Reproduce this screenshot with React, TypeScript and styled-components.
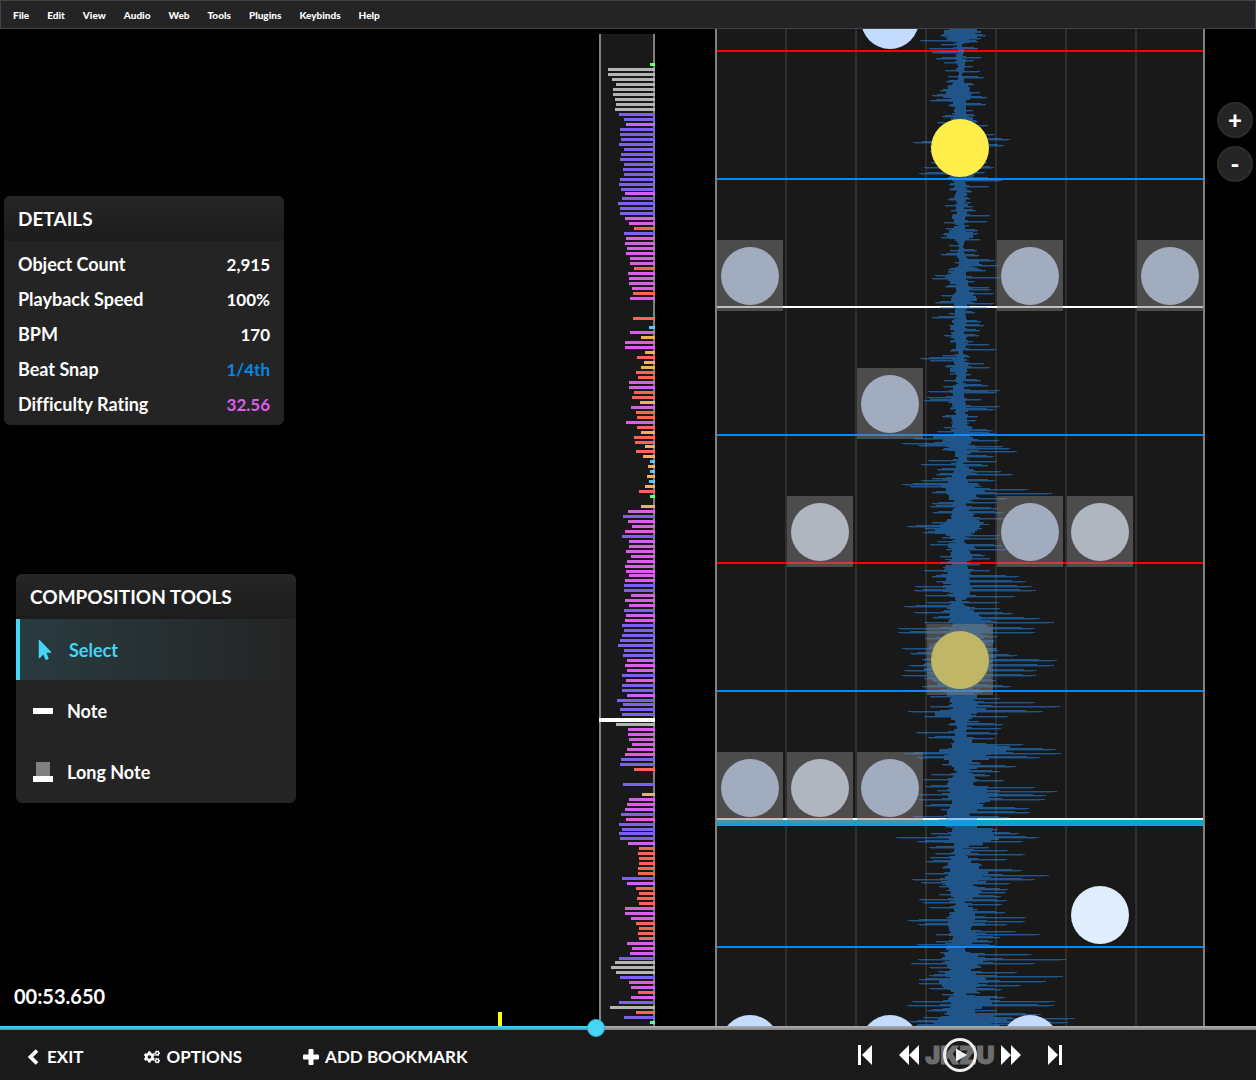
import React, { useState } from 'react';
import styled, { createGlobalStyle } from 'styled-components';
import { FaCogs, FaMousePointer } from 'react-icons/fa';

const GlobalStyle = createGlobalStyle`
  * { box-sizing: border-box; }
  body {
    margin: 0;
    background: #000;
    color: #fff;
    font-family: Lato, "Liberation Sans", sans-serif;
    font-weight: 700;
    overflow: hidden;
  }
  button { font: inherit; color: inherit; background: none; border: 0; padding: 0; cursor: pointer; }
`;

/* ---------- data ---------- */

const MENU = ['File', 'Edit', 'View', 'Audio', 'Web', 'Tools', 'Plugins', 'Keybinds', 'Help'];

const DETAILS: { label: string; value: string; color?: string }[] = [
  { label: 'Object Count', value: '2,915' },
  { label: 'Playback Speed', value: '100%' },
  { label: 'BPM', value: '170' },
  { label: 'Beat Snap', value: '1/4th', color: '#0587e5' },
  { label: 'Difficulty Rating', value: '32.56', color: '#d85fe8' },
];

const DENSITY_COLORS: Record<string, string> = {
  W: '#b4b4b4',
  P: '#7b61ee',
  M: '#d95fe8',
  R: '#fc6358',
  O: '#f5ad5a',
  C: '#5ac4ff',
  G: '#5dff75',
};

/* Runs of bars: start offset, then colour key + width for each bar. */
const DENSITY: [number, string][] = [
  [29, 'G5 W47 W47 W43 W39 W42 W42 W40 W39 W40 P36 P31 M29 P35 P35 P34 P36 P31 P34 P35 P31 P32 P31 P35 P36 P34'],
  [158, 'M30 P33 P37 P35 P35 M30 M26 R21 P31 M29 M30 M28 M29 M25 M25 R21 M27 M26 M26 M23 R22 M25'],
  [283, 'R22'],
  [292, 'C6 M25 O14 M30 M30 O10 R18 O11 O14 R19 R17 M26 M26 R21 R23 O15 M24 R19 R18 M29 R18 O14 R21 R20'],
  [411, 'O10 R19 O12 C5 O7 C5 O8 C6 O10 R16 G5'],
  [471, 'O14 M27 P32 M27 M23 M30 P33 M26 M26 M29 M24 M28 M30 M29'],
  [540, 'M26 M30 P31 P31 M24 M30 M26 P31 M29 M30 P33 P31 P33 P35 P37 P31 P32 M28 M30 M28 P33 M29 P33 P33 M28 P38'],
  [669, 'P32 P35 P33'],
  [689, 'W39 M27 M27 M26 M23 M28 M30 P34 P35 R21'],
  [749, 'P32'],
  [759, 'O13 M26 M28 M30 P34 M29 P36 P33'],
  [798, 'P36 P35 M27 R16 R17 R16 R16 R17 R17 P33 M28 R19 R16 R18 R16 M30 M30 M24 R19 R16 R17 R16 M28 M23 M25 P36'],
  [927, 'W40 W44 W39 P35 M26 M24 R17 M24 P36 W45 R19 P31 G5'],
];

const BARS = DENSITY.flatMap(([start, run]) =>
  run.split(' ').map((b, i) => ({ y: start + i * 5, color: DENSITY_COLORS[b[0]], width: Number(b.slice(1)) })),
);

const SNAP_LINES = [
  { y: 21, color: '#ff0000' },
  { y: 149, color: '#0587ff' },
  { y: 277, color: '#ffffff' },
  { y: 405, color: '#0587ff' },
  { y: 533, color: '#ff0000' },
  { y: 661, color: '#0587ff' },
  { y: 789, color: '#ffffff' },
  { y: 917, color: '#0587ff' },
];

type NoteData = { y: number; selected?: boolean };

const LANES: { color: string; notes: NoteData[] }[] = [
  { color: '#c2dbff', notes: [{ y: 218, selected: true }, { y: 730, selected: true }, { y: 986 }] },
  { color: '#e0edff', notes: [{ y: 474, selected: true }, { y: 730, selected: true }] },
  { color: '#c2dbff', notes: [{ y: -38 }, { y: 346, selected: true }, { y: 730, selected: true }, { y: 986 }] },
  { color: '#ffee4a', notes: [{ y: 90 }, { y: 602, selected: true }] },
  { color: '#c2dbff', notes: [{ y: 218, selected: true }, { y: 474, selected: true }, { y: 986 }] },
  { color: '#e0edff', notes: [{ y: 474, selected: true }, { y: 857 }] },
  { color: '#c2dbff', notes: [{ y: 218, selected: true }] },
];

/* Peaks of the waveform: offset and amplitude, one list for each channel. */
const LEFT_PEAKS =
  '35 20,40 40,44 19,48 31,52 28,58 24,62 16,70 15,76 12,81 14,86 13,90 20,95 28,100 30,105 12,113 8,116 18,122 23,128 12,137 20,142 47,146 30,151 30,157 22,162 29,167 36,173 41,178 14,184 11,189 11,199 12,205 15,210 9,215 8,222 16,228 14,234 17,237 19,245 11,250 10,254 19,262 5,269 12,275 25,278 28,286 15,295 19,302 25,307 20,313 11,317 28,325 11,335 16,341 10,350 10,355 18,358 40,360 30,366 15,373 10,380 16,386 17,391 32,397 33,400 36,408 10,416 18,422 9,427 16,431 23,438 46,443 58,445 42,449 18,460 32,464 39,469 23,474 24,478 28,480 39,484 58,486 50,488 14,492 28,496 10,503 28,506 30,512 27,517 9,522 28,526 53,528 35,532 37,537 18,541 23,544 30,549 14,556 20,562 20,567 17,570 36,576 28,581 24,586 45,590 46,595 35,602 34,606 56,612 46,617 27,622 36,628 62,632 62,638 35,643 27,648 58,653 50,659 38,665 51,670 56,675 58,678 36,686 38,690 56,696 30,701 11,706 30,711 52,716 36,724 12,732 44,737 32,743 9,749 20,753 56,757 43,764 18,768 4,774 29,779 36,786 35,790 23,794 44,799 42,805 35,809 19,816 47,820 24,826 15,833 29,837 64,841 43,847 31,853 25,857 30,861 34,867 18,873 35,879 48,882 39,886 21,894 21,899 41,902 37,907 31,913 11,917 14,920 52,924 42,930 10,934 24,941 24,944 43,952 20,959 42,963 49,967 31,971 22,975 31,979 41,983 41,988 31,994 18,1001 48,1005 53,1010 33,1017 37,1021 50,1025 44';
const RIGHT_PEAKS =
  '31 14,35 26,38 21,41 18,48 18,57 21,60 14,66 13,71 20,77 24,84 14,92 20,97 27,104 26,110 13,115 15,121 18,125 28,134 35,139 50,145 44,151 28,157 24,162 27,167 34,172 25,177 28,180 42,186 29,191 12,198 10,202 11,206 13,210 16,215 30,221 27,225 9,230 18,233 18,239 20,250 17,255 19,260 35,265 38,268 18,270 26,277 41,281 15,287 29,289 31,293 34,297 15,303 34,307 27,312 15,321 21,325 24,330 20,335 19,341 13,344 29,349 36,356 10,363 24,367 30,374 11,380 21,385 28,390 40,392 36,399 21,406 40,409 35,416 18,420 16,427 13,430 33,433 36,440 39,446 43,448 50,451 57,456 34,461 37,465 28,471 41,474 53,480 35,484 20,489 68,493 92,498 47,502 37,508 38,512 43,518 45,522 24,528 22,535 40,538 38,545 43,549 47,555 25,558 30,564 20,570 30,576 59,581 66,586 72,590 76,596 55,602 39,608 40,613 53,618 80,622 94,628 75,632 75,636 38,644 33,650 39,655 57,660 97,665 94,670 77,675 76,680 36,686 51,690 30,698 40,702 75,706 100,711 83,716 48,721 19,724 43,728 41,733 38,738 35,744 63,749 96,753 101,757 80,763 21,766 56,771 40,775 30,780 44,787 75,791 97,795 86,799 85,804 24,808 69,812 70,817 49,821 31,829 38,833 59,837 79,841 63,844 23,847 29,850 48,854 65,859 47,864 21,870 62,875 89,879 75,883 50,887 25,889 48,892 46,896 41,900 47,904 42,909 18,912 45,917 66,921 65,924 47,931 56,934 80,937 40,941 33,945 35,954 71,959 106,963 75,967 9,972 57,976 103,981 86,985 61,989 42,992 20,997 45,1001 95,1005 94,1010 37,1014 81,1018 115,1022 108,1025 40';

/* Body of the waveform between peaks: offset, left and right half widths. */
const BODY: [number, number, number][] = [
  [29, 12, 14], [36, 10, 16], [44, 1, 1], [60, 2, 3], [75, 0, 1], [85, 6, 6], [95, 10, 8], [110, 2, 3], [130, 10, 18],
  [170, 12, 18], [180, 3, 4], [200, 2, 3], [215, 4, 5], [225, 2, 2], [233, 12, 12], [243, 0, 1], [258, 0, 6], [263, 0, 22],
  [267, 4, 5], [277, 12, 5], [285, 3, 5], [297, 5, 12], [310, 3, 3], [325, 5, 6], [335, 6, 4], [345, 4, 3], [350, 0, 1],
  [368, 6, 7], [375, 2, 3], [385, 3, 3], [400, 12, 3], [410, 2, 4], [420, 6, 5], [432, 5, 8], [438, 25, 14], [445, 12, 8],
  [452, 3, 10], [460, 0, 2], [470, 5, 8], [480, 12, 6], [490, 14, 24], [500, 5, 6], [515, 5, 12], [525, 15, 20],
  [533, 20, 8], [537, 2, 2], [545, 8, 8], [560, 8, 8], [570, 12, 8], [580, 10, 8], [590, 10, 12], [600, 4, 1],
  [610, 12, 12], [620, 5, 20], [640, 20, 25], [670, 25, 25], [690, 12, 15], [700, 5, 10], [708, 8, 20], [713, 18, 10],
  [720, 4, 5], [730, 4, 5], [742, 5, 12], [748, 10, 44], [753, 18, 40], [760, 8, 12], [770, 2, 8], [785, 10, 14],
  [795, 12, 38], [805, 10, 15], [815, 8, 8], [822, 15, 18], [830, 5, 20], [838, 15, 30], [845, 4, 4], [855, 6, 8],
  [865, 8, 16], [873, 12, 30], [882, 14, 15], [893, 7, 16], [900, 4, 3], [910, 5, 10], [920, 10, 18], [930, 8, 12],
  [940, 8, 14], [950, 10, 2], [957, 14, 28], [964, 8, 20], [970, 8, 12], [980, 14, 28], [987, 12, 12], [992, 4, 5],
  [1003, 12, 34], [1010, 12, 6], [1016, 15, 36], [1026, 32, 40],
];

const WAVE_TOP = 29;
const WAVE_HEIGHT = 997;

function parsePeaks(list: string) {
  return new Map(list.split(',').map((p) => p.split(' ').map(Number) as [number, number]));
}

function bodyAt(y: number, side: 1 | 2) {
  const i = Math.max(1, BODY.findIndex(([by]) => by > y));
  const a = BODY[i - 1];
  const b = BODY[i];
  return a[side] + ((b[side] - a[side]) * (y - a[0])) / (b[0] - a[0]);
}

function buildWave() {
  const sides = [
    { peaks: parsePeaks(LEFT_PEAKS), side: 1 as const, dir: -1 },
    { peaks: parsePeaks(RIGHT_PEAKS), side: 2 as const, dir: 1 },
  ];
  let solid = '';
  let faint = '';
  let seed = 7;
  const random = () => {
    seed = (seed * 16807) % 2147483647;
    return seed / 2147483647;
  };
  const bar = (y: number, from: number, to: number, dir: number) =>
    dir < 0 ? `M${245 - to} ${y}h${to - from}v1h${from - to}z` : `M${245 + from} ${y}h${to - from}v1h${from - to}z`;
  for (const { peaks, side, dir } of sides) {
    let block = 0;
    let left = 0;
    for (let row = 0; row < WAVE_HEIGHT; row++) {
      const y = row + WAVE_TOP;
      const body = bodyAt(y, side);
      if (left === 0) {
        block = Math.round(body * (0.65 + random() * 0.8) + random() * 3);
        left = 1 + Math.floor(random() * 3);
      }
      left -= 1;
      const peak = peaks.get(y) ?? 0;
      const next = peaks.get(y + 1) ?? 0;
      const prev = peaks.get(y - 1) ?? 0;
      const step = Math.round(body + (next - body) * (random() < 0.5 ? 0.75 : 0.2));
      const width = Math.max(block, peak, step, 1);
      const tail = Math.round(prev * 0.95);
      solid += bar(row, 0, width, dir);
      if (tail > width) faint += bar(row, width, tail, dir);
    }
  }
  return { solid, faint };
}

const WAVE = buildWave();

/* ---------- layout ---------- */

const Screen = styled.div`
  display: flex;
  flex-direction: column;
  height: 100vh;
`;

const MenuBar = styled.nav`
  display: flex;
  align-items: center;
  height: 29px;
  padding: 0 3px;
  background: #242424;
  border: 1px solid #41414a;
`;

const MenuItem = styled.button`
  height: 100%;
  padding: 0 9px;
  font-size: 10px;
  font-weight: 900;
`;

const Stage = styled.main`
  display: flex;
  flex: 1;
  min-height: 0;
`;

const Side = styled.div`
  display: flex;
  flex: 1;
  flex-direction: column;
  align-items: flex-start;
  padding: 167px 4px 17px;
`;

const Panel = styled.section`
  width: 280px;
  padding-bottom: 1px;
  background: #242424;
  border-radius: 6px;
  font-variant-ligatures: none;
  overflow: hidden;
`;

const ToolPanel = styled(Panel)`
  margin: 149px 12px 0;
`;

const PanelTitle = styled.h2`
  height: 45px;
  margin: 0;
  padding: 0 14px;
  font-size: 19px;
  line-height: 46px;
  background: linear-gradient(#262626, #1c1c1c);
`;

const DetailList = styled.dl`
  margin: 0;
  padding: 5px 14px 3px;
`;

const DetailRow = styled.div`
  display: flex;
  align-items: baseline;
  justify-content: space-between;
  height: 35px;
  font-size: 18px;
  line-height: 36px;
`;

const DetailValue = styled.dd<{ $color?: string }>`
  margin: 0;
  color: ${(p) => p.$color ?? '#fff'};
  font-size: 17px;
`;

const Tool = styled.button<{ $active: boolean }>`
  display: flex;
  align-items: center;
  gap: 14px;
  width: 100%;
  height: 61px;
  padding-left: ${(p) => (p.$active ? '15px' : '13px')};
  border-left: 4px solid ${(p) => (p.$active ? '#45d6f5' : 'transparent')};
  background: ${(p) => (p.$active ? 'linear-gradient(90deg, #293b40, #242424)' : 'none')};
  color: ${(p) => (p.$active ? '#45d6f5' : '#fff')};
  font-size: 18px;
`;

const ToolIcon = styled.span`
  display: flex;
  justify-content: center;
  width: 20px;
`;

const Clock = styled.time`
  margin-top: auto;
  padding-left: 10px;
  font-size: 20px;
  line-height: 26px;
`;

const DensityGraph = styled.div`
  width: 56px;
  margin: 5px 60px 0 0;
  background: #191919;
`;

const Field = styled.div`
  position: relative;
  width: 490px;
  background: #191919;
  border: solid #808080;
  border-width: 0 2px;
  overflow: hidden;
`;

const Lanes = styled.div`
  display: grid;
  grid-template-columns: repeat(7, 66px);
  column-gap: 4px;
  height: 100%;
`;

const Lane = styled.div`
  position: relative;
`;

const Layer = styled.div`
  position: absolute;
  inset: 0;
`;

const Dividers = styled(Layer)`
  background: repeating-linear-gradient(90deg, transparent 0 68px, #2f2f2f 68px 70px);
`;

const SnapLine = styled.div<{ $color: string }>`
  position: absolute;
  left: 0;
  right: 0;
  height: 2px;
  background: ${(p) => p.$color};
`;

const HitLine = styled(SnapLine)`
  height: 6px;
`;

const WaveSvg = styled.svg`
  position: absolute;
  top: 0;
  left: -2px;
`;

const NoteHead = styled.div<{ $color: string }>`
  position: absolute;
  left: 4px;
  width: 58px;
  height: 58px;
  border-radius: 50%;
  background: ${(p) => p.$color};
`;

const Selection = styled.div`
  position: absolute;
  left: 0;
  width: 66px;
  height: 71px;
  background: rgba(127, 127, 127, 0.5);
`;

const ZoomControls = styled.div`
  display: flex;
  flex-direction: column;
  align-items: flex-end;
  gap: 8px;
  width: 51px;
  padding: 73px 3px 0 0;
`;

const ZoomButton = styled.button`
  width: 36px;
  height: 36px;
  border: 2px solid #2c2c2c;
  border-radius: 50%;
  background: #242424;
  font-size: 24px;
  font-weight: 900;
  line-height: 30px;
`;

const Timeline = styled.div`
  position: relative;
  height: 4px;
`;

const Seek = styled.input<{ $fill: number }>`
  display: block;
  width: 100%;
  height: 4px;
  margin: 0;
  appearance: none;
  background: linear-gradient(rgba(0, 0, 0, 0) 25%, rgba(0, 0, 0, 0.25)),
    linear-gradient(90deg, #40d2f2 ${(p) => p.$fill}%, #a8a8a8 ${(p) => p.$fill}%);

  &::-webkit-slider-thumb {
    appearance: none;
    width: 18px;
    height: 18px;
    border: 1px solid #35b0cc;
    border-radius: 50%;
    background: #45d6f5;
  }
`;

const Bookmark = styled.div`
  position: absolute;
  bottom: 4px;
  width: 4px;
  height: 14px;
  background: #ffff00;
`;

const Footer = styled.footer`
  display: flex;
  justify-content: space-between;
  height: 50px;
  padding: 0 51px 0 28px;
  background: #1a1a1a;
`;

const Actions = styled.div`
  display: flex;
  gap: 61px;
  padding-top: 3px;
`;

const Action = styled.button`
  display: flex;
  align-items: center;
  gap: 6px;
  font-size: 17px;
`;

const Transport = styled.div`
  display: flex;
  align-items: center;
  justify-content: center;
  gap: 24px;
  width: 490px;
`;

const IconButton = styled.button`
  display: flex;
  position: relative;
  justify-content: center;
  min-width: 20px;
`;

const Watermark = styled.span`
  position: absolute;
  left: 50%;
  top: 50%;
  transform: translate(-50%, -50%);
  color: #6e6e6e;
  -webkit-text-stroke: 1px #6e6e6e;
  font-family: Inter, sans-serif;
  font-size: 25px;
  font-weight: 900;
`;

const PlayIcon = styled.svg`
  position: relative;
`;

/* ---------- parts ---------- */

const NoteIcon = () => (
  <svg width="20" height="6">
    <rect width="20" height="6" fill="#fff" />
  </svg>
);

const LongNoteIcon = () => (
  <svg width="20" height="20">
    <rect x="3" width="14" height="14" fill="#808080" />
    <rect y="14" width="20" height="6" fill="#fff" />
  </svg>
);

const TOOLS = [
  { name: 'Select', icon: <FaMousePointer size={20} /> },
  { name: 'Note', icon: <NoteIcon /> },
  { name: 'Long Note', icon: <LongNoteIcon /> },
];

const BackIcon = () => (
  <svg width="13" height="16" viewBox="0 0 13 16">
    <path d="M9 1.5L2.5 8L9 14.5" fill="none" stroke="#fff" strokeWidth="3.8" />
  </svg>
);

const PlusIcon = () => (
  <svg width="16" height="16" viewBox="0 0 16 16" fill="#fff">
    <rect x="5.5" width="5" height="16" rx="1" />
    <rect y="5.5" width="16" height="5" rx="1" />
  </svg>
);

const SkipIcon = ({ flip }: { flip?: boolean }) => (
  <svg width="14" height="20" viewBox="0 0 14 20">
    <g fill="#fff" transform={flip ? 'translate(14 0) scale(-1 1)' : undefined}>
      <rect width="3" height="20" />
      <path d="M14 0v20L4 10z" />
    </g>
  </svg>
);

const WindIcon = ({ flip }: { flip?: boolean }) => (
  <svg width="20" height="20" viewBox="0 0 20 20">
    <path
      fill="#fff"
      transform={flip ? 'translate(20 0) scale(-1 1)' : undefined}
      d="M10 0v20L0 10zM20 0v20L10 10z"
    />
  </svg>
);

function Density() {
  return (
    <DensityGraph>
      <svg width="56" height="100%" viewBox="0 0 56 992" preserveAspectRatio="none" display="block">
        <rect width="2" height="992" fill="#808080" />
        <rect x="54" width="2" height="992" fill="#808080" />
        {BARS.map((b) => (
          <rect key={b.y} x={56 - b.width} y={b.y} width={b.width} height="3" fill={b.color} />
        ))}
        <rect y="684" width="56" height="4" fill="#fff" />
      </svg>
    </DensityGraph>
  );
}

function Playfield() {
  return (
    <Field>
      <Dividers />
      <Layer>
        {SNAP_LINES.map((l) => (
          <SnapLine key={l.y} $color={l.color} style={{ top: l.y }} />
        ))}
        <HitLine $color="#08a6cc" style={{ top: 791 }} />
      </Layer>
      <WaveSvg width="490" height={WAVE_HEIGHT} shapeRendering="crispEdges" fill="#248cf0">
        <path d={WAVE.solid} opacity="0.52" />
        <path d={WAVE.faint} opacity="0.25" />
      </WaveSvg>
      <Lanes>
        {LANES.map((lane, i) => (
          <Lane key={i}>
            {lane.notes.map((n) => (
              <React.Fragment key={n.y}>
                <NoteHead $color={lane.color} style={{ top: n.y }} />
                {n.selected && <Selection style={{ top: n.y - 7 }} />}
              </React.Fragment>
            ))}
          </Lane>
        ))}
      </Lanes>
    </Field>
  );
}

export default function App() {
  const [tool, setTool] = useState('Select');
  const [position, setPosition] = useState(474);

  return (
    <Screen>
      <GlobalStyle />
      <MenuBar>
        {MENU.map((m) => (
          <MenuItem key={m}>{m}</MenuItem>
        ))}
      </MenuBar>
      <Stage>
        <Side>
          <Panel>
            <PanelTitle>DETAILS</PanelTitle>
            <DetailList>
              {DETAILS.map((d) => (
                <DetailRow key={d.label}>
                  <dt>{d.label}</dt>
                  <DetailValue $color={d.color}>{d.value}</DetailValue>
                </DetailRow>
              ))}
            </DetailList>
          </Panel>
          <ToolPanel>
            <PanelTitle>COMPOSITION TOOLS</PanelTitle>
            {TOOLS.map((t) => (
              <Tool key={t.name} $active={t.name === tool} onClick={() => setTool(t.name)}>
                <ToolIcon>{t.icon}</ToolIcon>
                {t.name}
              </Tool>
            ))}
          </ToolPanel>
          <Clock>00:53.650</Clock>
        </Side>
        <Density />
        <Playfield />
        <ZoomControls>
          <ZoomButton>+</ZoomButton>
          <ZoomButton>-</ZoomButton>
        </ZoomControls>
      </Stage>
      <Timeline>
        <Seek
          type="range"
          min={0}
          max={1000}
          value={position}
          $fill={position / 10}
          aria-label="Song position"
          onChange={(e) => setPosition(Number(e.target.value))}
        />
        <Bookmark style={{ left: '39.65%' }} />
      </Timeline>
      <Footer>
        <Actions>
          <Action>
            <BackIcon />
            EXIT
          </Action>
          <Action>
            <FaCogs size={16} />
            OPTIONS
          </Action>
          <Action>
            <PlusIcon />
            ADD BOOKMARK
          </Action>
        </Actions>
        <Transport>
          <IconButton aria-label="Skip to start">
            <SkipIcon />
          </IconButton>
          <IconButton aria-label="Rewind">
            <WindIcon />
          </IconButton>
          <IconButton aria-label="Play">
            <Watermark>JKZU</Watermark>
            <PlayIcon width="34" height="34" viewBox="0 0 34 34">
              <circle cx="17" cy="17" r="15.5" fill="none" stroke="#eee" strokeWidth="3" />
              <path d="M13 10.5v13L24 17z" fill="#eee" />
            </PlayIcon>
          </IconButton>
          <IconButton aria-label="Fast forward">
            <WindIcon flip />
          </IconButton>
          <IconButton aria-label="Skip to end">
            <SkipIcon flip />
          </IconButton>
        </Transport>
      </Footer>
    </Screen>
  );
}
